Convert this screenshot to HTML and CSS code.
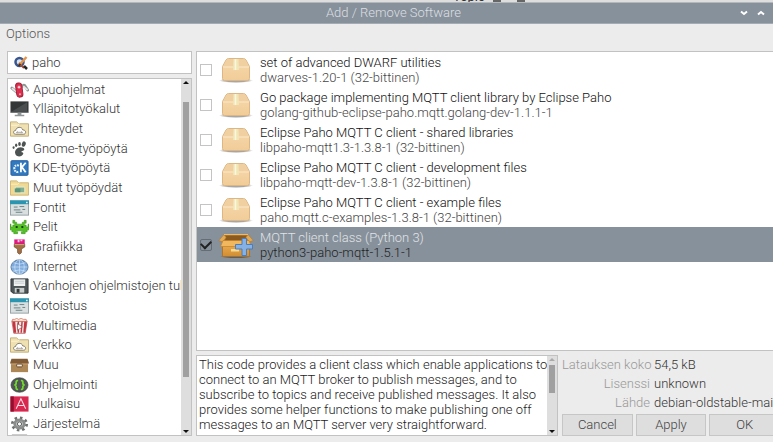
FILE: index.html
```html
<!DOCTYPE html>
<html lang="fi">
<head>
<meta charset="utf-8">
<title>Add / Remove Software</title>
<link rel="stylesheet" href="styles.css">
</head>
<body>
<svg class="defs" aria-hidden="true">
  <defs>
    <linearGradient id="boxFace" x1="0" y1="0" x2="0" y2="1"><stop offset="0" stop-color="#f8d9ac"/><stop offset="1" stop-color="#f0cc98"/></linearGradient>
    <linearGradient id="globeFill" x1="0" y1="0" x2="0" y2="1"><stop offset="0" stop-color="#6d9fd8"/><stop offset="1" stop-color="#90b9e6"/></linearGradient>
    <linearGradient id="openFace" x1="0" y1="0" x2="0" y2="1"><stop offset="0" stop-color="#f0b25a"/><stop offset="1" stop-color="#d18c30"/></linearGradient>
    <radialGradient id="shade"><stop offset=".6" stop-color="#000" stop-opacity=".35"/><stop offset="1" stop-color="#000" stop-opacity="0"/></radialGradient>
  </defs>
  <symbol id="package" viewBox="0 0 36 30">
    <ellipse cx="18" cy="25.500" rx="17" ry="2.500" fill="url(#shade)"/>
    <path d="M4.500 11.500 L8 5 Q9 3.500 10.500 3.500 H25.500 Q27 3.500 28 5 L31.500 11.500 V23.500 Q31.500 25.500 29.500 25.500 H6.500 Q4.500 25.500 4.500 23.500Z" fill="url(#boxFace)" stroke="#dcb684"/>
    <path d="M5.200 11.500 L8.700 5.200 Q9.500 4 10.500 4 H25.500 Q26.500 4 27.300 5.200 L30.800 11.500Z" fill="#f0cfa0"/>
    <path d="M5 12H31" stroke="#fbe8c8"/>
    <path d="M15.500 4H20.500L21 15H15Z" fill="#f1e6b8"/>
    <path d="M17.500 4V15" stroke="#fbf7dc" stroke-width="1.500"/>
  </symbol>
  <symbol id="window" viewBox="0 0 20 16">
    <rect x=".5" y=".5" width="19" height="15" fill="#d9dfdf" stroke="#96a2a5"/>
    <rect width="20" height="4" fill="#2995b0"/><path d="M17 1.500h1.500v1.500H17z" fill="#fff"/>
    <path d="M4 7h4M10 6.500h5M4 10h7M13 9.500h3M6 12.500h7" stroke="#657f86" stroke-width="1"/>
  </symbol>
  <symbol id="cloudfolder" viewBox="0 0 20 16">
    <path d="M.5 15.500V.5H7L9 2.500H19.500V15.500Z" fill="#efe1b1" stroke="#c2ae74"/>
    <path d="M1 4H8L10 2.500" fill="none" stroke="#fff5cf"/>
    <path d="M6 13.500C3 13.500 3 9.500 6 9.500C6.500 5.500 12.500 5 13.500 9C17.500 9 17 13.500 14.500 13.500Z" fill="#fff" stroke="#7f7967"/>
    <path d="M7 11.500h6M8 10.500l-1 1 1 1M12 10.500l1 1-1 1" stroke="#83796a" fill="none" stroke-width=".7"/>
  </symbol>
</svg>

<div class="behind"><span class="behind-text">Topic</span><i class="behind-mark"></i><i class="behind-mark"></i></div>

<div class="window">
  <header class="titlebar">
    <h1>Add / Remove Software</h1>
    <div class="window-buttons">
      <button aria-label="Minimize"><svg viewBox="0 0 8 6"><path d="M1 1.500L4 4L7 1.500" /></svg></button>
      <button aria-label="Maximize"><svg viewBox="0 0 8 6"><path d="M1 4.500L4 2L7 4.500" /></svg></button>
    </div>
  </header>
  <nav class="menubar"><button>Options</button></nav>

  <main class="content">
    <aside class="sidebar">
      <div class="search">
        <svg viewBox="0 0 14 14" aria-hidden="true"><circle cx="5.500" cy="6" r="4" fill="#d9e6f2" stroke="#3b568f" stroke-width="2.500"/><path d="M5 7l5 5" stroke="#a84c30" stroke-width="2"/><path d="M12.500 1L5 9.500" stroke="#e5954b" stroke-width="2.500"/><path d="M10 10l3 3" stroke="#252525" stroke-width="2.500"/><path d="M4.500 10l2-2" stroke="#443429" stroke-width="2"/></svg>
        <input type="text" value="paho" aria-label="Search">
      </div>
      <div class="categories">
        <ul>
          <li><svg viewBox="0 0 20 16"><path d="M2 6L8 11M13 4Q15 2 16 4L18.500 8" fill="none" stroke="#8e9492" stroke-width="3" stroke-linecap="round"/><path d="M2 6L8 11M14 4L18.500 8" stroke="#e6e9e8" stroke-width="1.800"/><rect x="6.500" y=".5" width="6.500" height="15" rx="3.200" transform="rotate(-8 10 8)" fill="#da304d" stroke="#a51e39"/><path d="M8 5h3M9.500 3.500v3" stroke="#fff"/><circle cx="10.500" cy="12.500" r="1" fill="#f8b8c0"/></svg><span>Apuohjelmat</span></li>
          <li><svg viewBox="0 0 20 16"><rect x=".5" width="19" height="12" fill="#343738"/><path d="M2 10.500L18 1v9.500z" fill="#4b4f50"/><path d="M1 11.500h18" stroke="#797d7d"/><path d="M8 12h4v2h3v1.500H5V14h3z" fill="#909494"/></svg><span>Ylläpitotyökalut</span></li>
          <li><svg><use href="#cloudfolder"/></svg><span>Yhteydet</span></li>
          <li><svg viewBox="0 0 20 16"><g fill="#4d5352"><path d="M6 9C9 5 14 6 15 8C15.500 10 12 10 12 11C12 12 14 11 14 13C13 16 8 17 6 14C5 12 5 11 6 9Z"/><ellipse cx="14.500" cy="2.800" rx="2" ry="2.900" transform="rotate(18 14.500 2.800)"/><ellipse cx="10" cy="2.800" rx="1.400" ry="2.100"/><ellipse cx="6.500" cy="4" rx="1.200" ry="1.800"/><ellipse cx="3.800" cy="6.500" rx="1.100" ry="1.500"/></g></svg><span>Gnome-työpöytä</span></li>
          <li><svg viewBox="0 0 20 16"><rect x="1" y=".3" width="18" height="15.400" rx="1" fill="#327ac0" stroke="#245d9c"/><path d="M9.500 5.500Q5 4 4.500 8.500Q5 13 9.500 12" fill="none" stroke="#e6f0fa" stroke-width="2.200" stroke-dasharray="2 .8"/><path d="M11.500 2.500v10M16.500 2.500L12.500 7l4 5.500" stroke="#fff" stroke-width="1.900" fill="none"/></svg><span>KDE-työpöytä</span></li>
          <li><svg viewBox="0 0 20 16"><path d="M.5 15.500V.5H7L9 2.500H19.500V15.500Z" fill="#f0d994" stroke="#ceb574"/><path d="M1 4H8L10 2.500" fill="none" stroke="#fff1bd"/><path d="M5.500 7h10v6h-10z" fill="#7fae92" stroke="#e4edd0"/><path d="M5 8.500h6v4H5z" fill="#5a957c"/></svg><span>Muut työpöydät</span></li>
          <li><svg><use href="#window"/></svg><span>Fontit</span></li>
          <li><svg viewBox="0 0 20 16"><path d="M3 1h2v2h2v2h6V3h2V1h2v3h-2v2h2v2h2V5h1v6h-2v2h-2v2h-4v-2h2v-1H6v1h2v2H4v-2H2v-2H0V5h1v3h2V6h2V4H3z" fill="#52c323" stroke="#388d18" stroke-width=".6"/><path d="M6 7h2v2H6zM12 7h2v2h-2z" fill="#173b0d"/></svg><span>Pelit</span></li>
          <li><svg viewBox="0 0 20 16"><path d="M4.500 0h11v5h-11z" fill="#e51685"/><path d="M6 0h2v3h2V0h1v2h2V0" fill="#ffc4df"/><path d="M4.500 5h11v3L12 10v4q-2 3-4 0v-4L4.500 8z" fill="#a36f45" stroke="#765032" stroke-width=".8"/><path d="M5 5.500h10" stroke="#d3ac80"/></svg><span>Grafiikka</span></li>
          <li><svg viewBox="0 0 20 16"><ellipse cx="10" cy="8" rx="9" ry="7.600" fill="url(#globeFill)" stroke="#46698f" stroke-width=".8"/><path d="M10 .5v15M1.500 8h17M3.500 3.500q6.500 3 13 0M3.500 12.500q6.500-3 13 0" stroke="#d5e5f5" fill="none" stroke-width=".7"/><ellipse cx="10" cy="8" rx="5" ry="7.500" fill="none" stroke="#d5e5f5" stroke-width=".7"/></svg><span>Internet</span></li>
          <li><svg viewBox="0 0 20 16"><path d="M1 .5h18v15H3l-2-2z" fill="#4d5556" stroke="#303637"/><path d="M4 1h12v7H4z" fill="#eff1f1"/><path d="M5 3h10M5 5h10" stroke="#c3c8c8"/><path d="M5 10h10v5H5z" fill="#c8cccc"/><path d="M7 11h3v4H7z" fill="#333839"/></svg><span>Vanhojen ohjelmistojen tuki</span></li>
          <li><svg><use href="#window"/></svg><span>Kotoistus</span></li>
          <li><svg viewBox="0 0 20 16"><path d="M2 3h16l-2 12.700H4z" fill="#f4e9e6" stroke="#a63c3d" stroke-width=".7"/><path d="M2.500 3h3l1 12H4zM8 3h1.500v12H8zM12 3h1.500l-1 12H11zM15 3h3l-2 12h-2z" fill="#c53540"/><path d="M2 3q0-3 3-2q2-2 4 0q3-2 5 0q4-1 4 2z" fill="#fff4df" stroke="#c55a4e" stroke-width=".7"/><path d="M8 5.500l5 3.500-5 3.500z" fill="#fff" stroke="#8e5555" stroke-width=".8"/></svg><span>Multimedia</span></li>
          <li><svg><use href="#cloudfolder"/></svg><span>Verkko</span></li>
          <li><svg viewBox="0 0 20 16"><path d="M1 4h18v11.500H1z" fill="#ae8756"/><path d="M1.500 1.500h17l1.500 5H0z" fill="#805b36"/><path d="M1 7h18" stroke="#c6a273"/><rect x="7" y="7" width="6" height="3" rx="1" fill="#f4eddd" stroke="#624528"/></svg><span>Muu</span></li>
          <li><svg viewBox="0 0 20 16"><ellipse cx="10" cy="8" rx="9" ry="7.700" fill="#4f5654" stroke="#343837" stroke-width=".6"/><path d="M8.500 3.500Q6 3 6.500 6Q6.500 8 4.500 8Q6.500 8 6.500 10Q6 13 8.500 12.500M11.500 3.500Q14 3 13.500 6Q13.500 8 15.500 8Q13.500 8 13.500 10Q14 13 11.500 12.500" fill="none" stroke="#72e02a" stroke-width="1.700"/></svg><span>Ohjelmointi</span></li>
          <li><svg viewBox="0 0 20 16"><path d="M.5 0h19v16H.5z" fill="#d82850"/><path d="M.5 0H4v16H.5z" fill="#930e2e"/><path d="M6.500 13L11.500 2.500L16.500 13M8.500 9.500h6" fill="none" stroke="#ffdce2" stroke-width="1.100"/></svg><span>Julkaisu</span></li>
          <li><svg viewBox="0 0 20 16"><ellipse cx="10" cy="8" rx="7.500" ry="6.500" fill="none" stroke="#6e7170" stroke-width="3" stroke-dasharray="2.600 2.900"/><ellipse cx="10" cy="8" rx="5" ry="4.300" fill="#c7c9c8" stroke="#8a8d8c" stroke-width="3"/><circle cx="10" cy="8" r="2.200" fill="#fff" stroke="#555958"/></svg><span>Järjestelmä</span></li>
          <li class="cut"><svg viewBox="0 0 20 16"><path d="M2 0h16v16H2z" fill="#aaa"/></svg></li>
        </ul>
        <div class="scrollbar"><i class="up"></i><i class="thumb"></i><i class="down"></i></div>
      </div>
    </aside>

    <section class="results">
      <div class="packages">
        <label class="package"><input type="checkbox"><svg><use href="#package"/></svg><span class="label"><b>set of advanced DWARF utilities</b><small>dwarves-1.20-1 (32-bittinen)</small></span></label>
        <label class="package"><input type="checkbox"><svg><use href="#package"/></svg><span class="label"><b>Go package implementing MQTT client library by Eclipse Paho</b><small>golang-github-eclipse-paho.mqtt.golang-dev-1.1.1-1</small></span></label>
        <label class="package"><input type="checkbox"><svg><use href="#package"/></svg><span class="label"><b>Eclipse Paho MQTT C client - shared libraries</b><small>libpaho-mqtt1.3-1.3.8-1 (32-bittinen)</small></span></label>
        <label class="package"><input type="checkbox"><svg><use href="#package"/></svg><span class="label"><b>Eclipse Paho MQTT C client - development files</b><small>libpaho-mqtt-dev-1.3.8-1 (32-bittinen)</small></span></label>
        <label class="package"><input type="checkbox"><svg><use href="#package"/></svg><span class="label"><b>Eclipse Paho MQTT C client - example files</b><small>paho.mqtt.c-examples-1.3.8-1 (32-bittinen)</small></span></label>
        <label class="package selected"><input type="checkbox" checked><svg viewBox="0 0 36 30">
          <ellipse cx="18" cy="26.500" rx="16" ry="2" fill="url(#shade)"/>
          <path d="M6 4.500h24l1.500 9h-27z" fill="#a8712a"/>
          <path d="M8 6h20l1 5H7z" fill="#8c5a1c"/>
          <path d="M6 4.500L.8 10.500l4 1.500L8 7.500zM30 4.500l5.200 6-4 1.500L28 7.500z" fill="#e3aa56" stroke="#b47a2c" stroke-width=".6"/>
          <path d="M6 4.500h24" stroke="#e9bb72"/>
          <path d="M4.500 12h27v14.500h-27z" fill="url(#openFace)" stroke="#a96f22" stroke-width=".8"/>
          <path d="M5 10.500h26l2.500 6H2.500z" fill="#f0b75e" stroke="#c0802c" stroke-width=".7"/>
          <path d="M13 19h8v2.500h-8z" fill="#f8da90"/>
          <path d="M24 8.500h4.500v6h6v4.500h-6v6.500H24V19h-6.500v-4.500H24z" fill="#86b1e4" stroke="#4b7dba"/>
        </svg><span class="label"><b>MQTT client class (Python 3)</b><small>python3-paho-mqtt-1.5.1-1</small></span></label>
      </div>

      <div class="bottom">
        <div class="description">
          <p>This code provides a client class which enable applications to connect to an MQTT broker to publish messages, and to subscribe to topics and receive published messages. It also provides some helper functions to make publishing one off messages to an MQTT server very straightforward.</p>
          <div class="scrollbar"><i class="up dim"></i><i class="thumb short"></i><i class="down"></i></div>
        </div>
        <div class="details">
          <dl>
            <dt>Latauksen koko</dt><dd>54,5 kB</dd>
            <dt>Lisenssi</dt><dd>unknown</dd>
            <dt>Lähde</dt><dd>debian-oldstable-main</dd>
          </dl>
          <div class="actions"><button>Cancel</button><button>Apply</button><button>OK</button></div>
        </div>
      </div>
    </section>
  </main>
</div>
</body>
</html>
```
FILE: styles.css
```css
* { box-sizing: border-box; }

body {
  margin: 0;
  height: 100vh;
  overflow: hidden;
  display: flex;
  flex-direction: column;
  background: #ececec;
  color: #333;
  font: 300 13px/16px Roboto, "Liberation Sans", sans-serif;
}

button, input { font: inherit; color: inherit; }
.defs { position: absolute; width: 0; height: 0; }

.behind {
  flex: none;
  height: 3px;
  padding-left: 453px;
  overflow: hidden;
  display: flex;
  align-items: flex-end;
  gap: 16px;
  background: #dedede;
  border-bottom: 1px solid #b5b8ba;
}
.behind-text { flex: none; width: 24px; font-weight: 400; line-height: 10px; }
.behind-mark { flex: none; width: 8px; height: 3px; background: #666; }

/* The window runs a little past the right edge of the screen. */
.window {
  flex: 1;
  min-height: 0;
  width: calc(100% + 14px);
  display: flex;
  flex-direction: column;
}

.titlebar {
  flex: none;
  height: 21px;
  display: grid;
  grid-template-columns: 1fr auto 1fr;
  align-items: center;
  background: #87919b;
  border-bottom: 1px solid #a3abb3;
}
.titlebar h1 {
  grid-column: 2;
  margin: 0;
  font-size: 13px;
  font-weight: 300;
  color: #dcdfe2;
}
.window-buttons { display: flex; justify-content: flex-end; gap: 9px; padding-right: 22px; }
.window-buttons button { display: flex; padding: 0; border: 0; background: none; }
.window-buttons svg { width: 8px; height: 6px; fill: none; stroke: #fff; stroke-width: 2; }

.menubar { flex: none; height: 27px; padding: 2px 6px; }
.menubar button { padding: 0; border: 0; background: none; line-height: 16px; color: #555; }

.content {
  flex: 1;
  min-height: 0;
  display: flex;
  gap: 4px;
  padding: 0 7px 6px;
}

.sidebar { flex: none; width: 185px; display: flex; flex-direction: column; gap: 4px; }
.search {
  flex: none;
  height: 23px;
  display: flex;
  align-items: center;
  gap: 4px;
  padding: 0 6px;
  background: #fff;
  border: 1px solid #c2c2c2;
}
.search svg { flex: none; width: 14px; height: 14px; }
.search input { flex: 1; min-width: 0; padding: 0; border: 0; outline: 0; background: none; }

.categories {
  flex: 1;
  min-height: 0;
  display: flex;
  background: #fff;
  border: 1px solid #c2c2c2;
}
.categories ul {
  flex: 1;
  min-width: 0;
  margin: 0;
  padding: 1px 0 0 2px;
  list-style: none;
  display: grid;
  grid-template-rows: repeat(18, 1fr) 1px;
}
.categories li {
  display: flex;
  align-items: center;
  gap: 4px;
  min-width: 0;
  min-height: 0;
  overflow: hidden;
  white-space: nowrap;
}
.categories svg { flex: none; width: 19px; height: 16px; }
.categories .cut { align-items: flex-start; }

.scrollbar {
  flex: none;
  width: 10px;
  display: flex;
  flex-direction: column;
  align-items: center;
  padding: 2px 0;
  background: #dedede;
}
.up, .down { border: 3px solid transparent; border-top-width: 0; border-bottom: 3px solid #111; }
.down { border-width: 3px 3px 0; border-top-color: #111; margin-top: auto; }
.up.dim { border-bottom-color: #aaa; }
.thumb { width: 6px; height: 78%; margin-top: 18px; background: #a0a0a0; }
.thumb.short { height: 28px; margin-top: 4px; }

.results { flex: 1; min-width: 0; display: flex; flex-direction: column; gap: 4px; }
.packages { flex: 1; min-height: 0; background: #fff; border: 1px solid #c2c2c2; }
.package {
  height: 35px;
  display: flex;
  align-items: center;
  padding-left: 3px;
}
.package input {
  appearance: none;
  flex: none;
  width: 12px;
  height: 12px;
  margin: 0;
  border: 1px solid #c4c4c4;
  background: #fff;
}
.package input:checked {
  border-color: #646c74;
  border-radius: 2px;
  background: #87919b;
  display: grid;
  place-items: center;
}
.package input:checked::after {
  content: "";
  width: 8px;
  height: 5px;
  border: solid #222;
  border-width: 0 0 2px 2px;
  transform: translateY(-1px) rotate(-45deg);
}
.package svg { flex: none; width: 36px; height: 30px; margin: 0 6px; }
.label { display: flex; flex-direction: column; white-space: nowrap; }
.label b, .label small { font-size: 13px; font-weight: 300; line-height: 15px; }
.label b { color: #111; }
.label small { color: #444; }
.selected { background: #87919b; }
.selected b { color: #e0e3e6; }
.selected small { color: #222; }

.bottom { flex: none; height: 81px; display: flex; gap: 4px; }
.description {
  flex: none;
  width: 362px;
  display: flex;
  background: #fff;
  border: 1px solid #c2c2c2;
}
.description p { flex: 1; margin: 0 -4px 0 0; padding: 1px 0 0 2px; line-height: 15px; color: #222; }

.details { flex: 1; min-width: 0; display: flex; flex-direction: column; justify-content: space-between; }
.details dl {
  margin: 0;
  display: grid;
  grid-template-columns: 88px 1fr;
  column-gap: 4px;
  line-height: 19px;
  white-space: nowrap;
}
.details dt { text-align: right; color: #999; }
.details dd { margin: 0; color: #333; }
.actions { display: grid; grid-template-columns: repeat(3, 1fr); gap: 3px; }
.actions button {
  height: 22px;
  padding: 0;
  border: 1px solid #c6c6c6;
  background: #dedede;
  color: #444;
}
```
